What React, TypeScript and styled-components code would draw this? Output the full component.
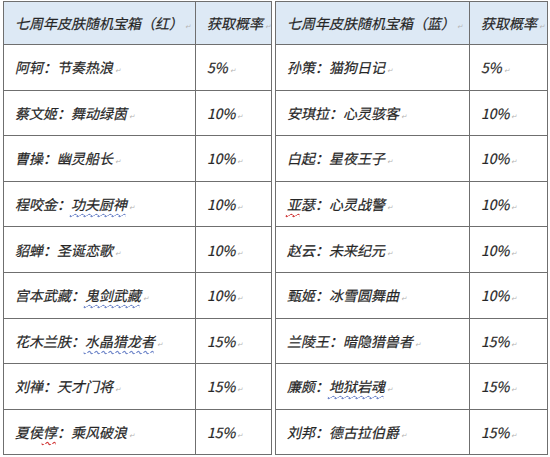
import styled, { createGlobalStyle } from 'styled-components';

const GlobalStyle = createGlobalStyle`
  html, body {
    margin: 0;
    padding: 0;
    background: #ffffff;
  }
`;

type Entry = {
  hero: string;
  skin: string;
  rate: string;
  mark?: 'blue' | 'red';
  markHero?: boolean;
};

const RED: Entry[] = [
  { hero: '阿轲', skin: '节奏热浪', rate: '5%' },
  { hero: '蔡文姬', skin: '舞动绿茵', rate: '10%' },
  { hero: '曹操', skin: '幽灵船长', rate: '10%' },
  { hero: '程咬金', skin: '功夫厨神', rate: '10%', mark: 'blue' },
  { hero: '貂蝉', skin: '圣诞恋歌', rate: '10%' },
  { hero: '宫本武藏', skin: '鬼剑武藏', rate: '10%', mark: 'blue' },
  { hero: '花木兰肤', skin: '水晶猎龙者', rate: '15%', mark: 'blue' },
  { hero: '刘禅', skin: '天才门将', rate: '15%' },
  { hero: '夏侯惇', skin: '乘风破浪', rate: '15%' },
];

const BLUE: Entry[] = [
  { hero: '孙策', skin: '猫狗日记', rate: '5%' },
  { hero: '安琪拉', skin: '心灵骇客', rate: '10%' },
  { hero: '白起', skin: '星夜王子', rate: '10%' },
  { hero: '亚瑟', skin: '心灵战警', rate: '10%', markHero: true },
  { hero: '赵云', skin: '未来纪元', rate: '10%' },
  { hero: '甄姬', skin: '冰雪圆舞曲', rate: '10%' },
  { hero: '兰陵王', skin: '暗隐猎兽者', rate: '15%' },
  { hero: '廉颇', skin: '地狱岩魂', rate: '15%', mark: 'blue' },
  { hero: '刘邦', skin: '德古拉伯爵', rate: '15%' },
];

function HeroName({ entry }: { entry: Entry }) {
  if (entry.hero === '夏侯惇') {
    return (
      <>
        夏侯<Squiggle $tone="red">惇</Squiggle>
      </>
    );
  }
  if (entry.markHero) {
    return (
      <>
        <Squiggle $tone="red">{entry.hero[0]}</Squiggle>
        {entry.hero.slice(1)}
      </>
    );
  }
  return <>{entry.hero}</>;
}

function SkinTable({ title, rows, nameWidth, width }: { title: string; rows: Entry[]; nameWidth: number; width: number }) {
  return (
    <Table $width={width}>
      <colgroup>
        <col style={{ width: nameWidth }} />
        <col />
      </colgroup>
      <thead>
        <tr>
          <HeadCell>
            <Slant>
              {title}
              <Return>↵</Return>
            </Slant>
          </HeadCell>
          <HeadCell>
            <Slant>
              获取概率<Return>↵</Return>
            </Slant>
          </HeadCell>
        </tr>
      </thead>
      <tbody>
        {rows.map((r) => (
          <Row key={r.hero}>
            <Cell>
              <Slant>
                <HeroName entry={r} />：
                {r.mark === 'blue' ? <Squiggle $tone="blue">{r.skin}</Squiggle> : r.skin}
                <Return>↵</Return>
              </Slant>
            </Cell>
            <Cell>
              <Slant>
                {r.rate}
                <Return>↵</Return>
              </Slant>
            </Cell>
          </Row>
        ))}
      </tbody>
    </Table>
  );
}

export default function App() {
  return (
    <>
      <GlobalStyle />
      <Page>
        <SkinTable title="七周年皮肤随机宝箱（红）" rows={RED} nameWidth={192} width={269} />
        <SkinTable title="七周年皮肤随机宝箱（蓝）" rows={BLUE} nameWidth={194} width={273} />
      </Page>
    </>
  );
}

const Page = styled.div`
  display: flex;
  align-items: flex-start;
  gap: 3px;
  padding: 1px 0 0 3px;
  width: 550px;
  height: 457px;
  box-sizing: border-box;
  overflow: hidden;
  font-family: 'Noto Sans CJK SC', 'Noto Sans', sans-serif;
  color: #262626;
`;

const Table = styled.table<{ $width: number }>`
  width: ${(p) => p.$width}px;
  border-collapse: collapse;
  table-layout: fixed;
  border: 1px solid #6f6f6f;
`;

const HeadCell = styled.th`
  height: 43px;
  padding: 0 0 0 10px;
  box-sizing: border-box;
  background: #dde9f5;
  border: 1px solid #6f6f6f;
  text-align: left;
  font-weight: normal;
  font-size: 14px;
  white-space: nowrap;
  overflow: hidden;
`;

const Row = styled.tr`
  height: 45.6px;
`;

const Cell = styled.td`
  padding: 0 0 0 10px;
  border: 1px solid #6f6f6f;
  font-size: 14px;
  white-space: nowrap;
  overflow: hidden;
`;

const Slant = styled.span`
  display: inline-block;
  transform: skewX(-13deg);
  transform-origin: 0 100%;
  -webkit-text-stroke: 0.2px #262626;
`;

const Return = styled.span`
  font-size: 7px;
  color: #b5b5b5;
  margin-left: 2px;
  -webkit-text-stroke: 0;
`;

const Squiggle = styled.span<{ $tone: 'blue' | 'red' }>`
  text-decoration: underline wavy ${(p) => (p.$tone === 'blue' ? '#6f86c9' : '#d23a3a')};
  text-decoration-thickness: 1px;
  text-underline-offset: 3px;
`;
